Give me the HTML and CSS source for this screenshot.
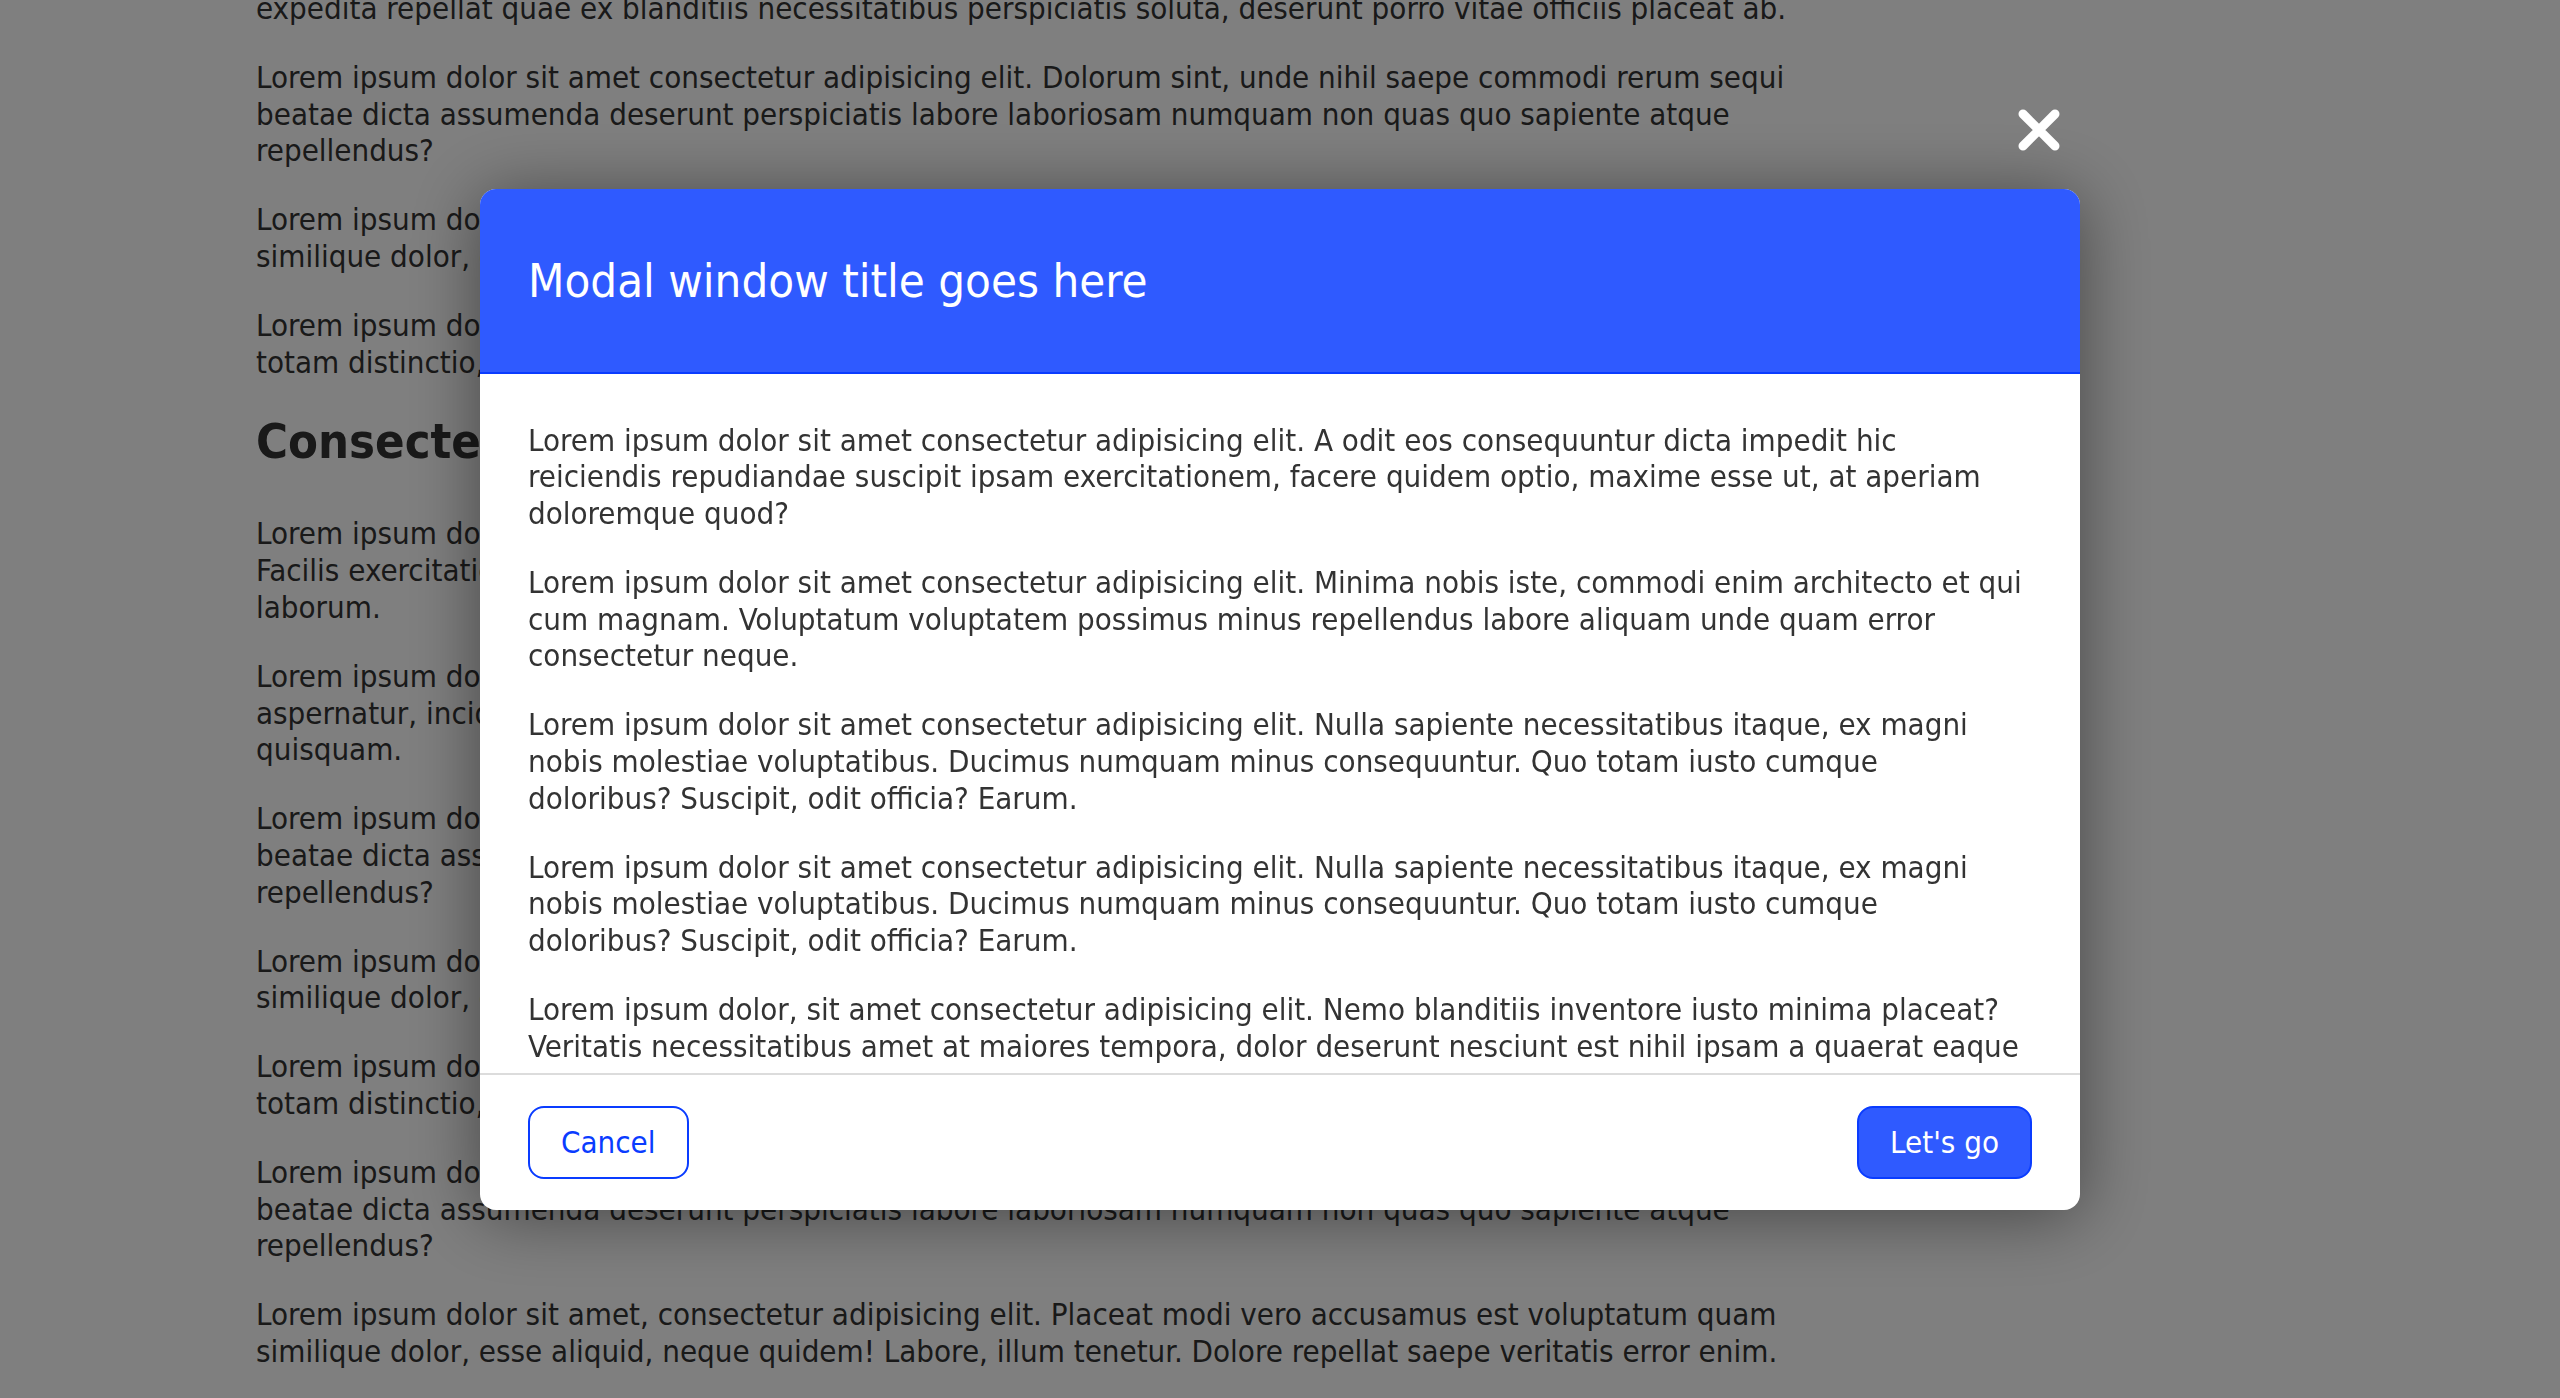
FILE: index.html
```html
<!DOCTYPE html>
<html lang="en">
<head>
<meta charset="utf-8">
<title>Modal</title>
<link rel="stylesheet" href="styles.css">
</head>
<body>
<main class="page">
  <p class="cont">expedita repellat quae ex blanditiis necessitatibus perspiciatis soluta, deserunt porro vitae officiis placeat ab.</p>
  <p>Lorem ipsum dolor sit amet consectetur adipisicing elit. Dolorum sint, unde nihil saepe commodi rerum sequi<br>beatae dicta assumenda deserunt perspiciatis labore laboriosam numquam non quas quo sapiente atque<br>repellendus?</p>
  <p>Lorem ipsum dolor sit amet, consectetur adipisicing elit. Placeat modi vero accusamus est voluptatum quam<br>similique dolor, esse aliquid, neque quidem! Labore, illum tenetur. Dolore repellat saepe veritatis error enim.</p>
  <p>Lorem ipsum dolor sit amet consectetur adipisicing elit. Quas nemo voluptate, eius dolorem ab ipsum eaque<br>totam distinctio, laudantium beatae obcaecati fugit dolorum aperiam minus ad.</p>
  <h2>Consectetur adipisicing</h2>
  <p>Lorem ipsum dolor sit amet consectetur adipisicing elit. Voluptas eligendi quia dolor ipsa quae sed.<br>Facilis exercitationem, officiis iusto aut dolore reprehenderit quas repellendus nisi dolores neque<br>laborum.</p>
  <p>Lorem ipsum dolor sit amet consectetur adipisicing elit. Ad nobis sint ratione architecto blanditiis<br>aspernatur, incidunt, doloremque eum omnis nam deleniti quos molestias porro rerum totam harum<br>quisquam.</p>
  <p>Lorem ipsum dolor sit amet consectetur adipisicing elit. Dolorum sint, unde nihil saepe commodi rerum sequi<br>beatae dicta assumenda deserunt perspiciatis labore laboriosam numquam non quas quo sapiente atque<br>repellendus?</p>
  <p>Lorem ipsum dolor sit amet, consectetur adipisicing elit. Placeat modi vero accusamus est voluptatum quam<br>similique dolor, esse aliquid, neque quidem! Labore, illum tenetur. Dolore repellat saepe veritatis error enim.</p>
  <p>Lorem ipsum dolor sit amet consectetur adipisicing elit. Quas nemo voluptate, eius dolorem ab ipsum eaque<br>totam distinctio, laudantium beatae obcaecati fugit dolorum aperiam minus ad.</p>
  <p>Lorem ipsum dolor sit amet consectetur adipisicing elit. Dolorum sint, unde nihil saepe commodi rerum sequi<br>beatae dicta assumenda deserunt perspiciatis labore laboriosam numquam non quas quo sapiente atque<br>repellendus?</p>
  <p>Lorem ipsum dolor sit amet, consectetur adipisicing elit. Placeat modi vero accusamus est voluptatum quam<br>similique dolor, esse aliquid, neque quidem! Labore, illum tenetur. Dolore repellat saepe veritatis error enim.</p>
</main>

<div class="overlay">
  <div class="dialog">
    <button class="close" type="button" aria-label="Close">
      <svg width="42" height="42" viewBox="0 0 42 42"><path d="M5 5L37 37M37 5L5 37" stroke="#fff" stroke-width="9" stroke-linecap="round" fill="none"/></svg>
    </button>
    <section class="modal">
      <header class="modal-header">
        <h1 class="modal-title">Modal window title goes here</h1>
      </header>
      <div class="modal-body">
        <p>Lorem ipsum dolor sit amet consectetur adipisicing elit. A odit eos consequuntur dicta impedit hic<br>reiciendis repudiandae suscipit ipsam exercitationem, facere quidem optio, maxime esse ut, at aperiam<br>doloremque quod?</p>
        <p>Lorem ipsum dolor sit amet consectetur adipisicing elit. Minima nobis iste, commodi enim architecto et qui<br>cum magnam. Voluptatum voluptatem possimus minus repellendus labore aliquam unde quam error<br>consectetur neque.</p>
        <p>Lorem ipsum dolor sit amet consectetur adipisicing elit. Nulla sapiente necessitatibus itaque, ex magni<br>nobis molestiae voluptatibus. Ducimus numquam minus consequuntur. Quo totam iusto cumque<br>doloribus? Suscipit, odit officia? Earum.</p>
        <p>Lorem ipsum dolor sit amet consectetur adipisicing elit. Nulla sapiente necessitatibus itaque, ex magni<br>nobis molestiae voluptatibus. Ducimus numquam minus consequuntur. Quo totam iusto cumque<br>doloribus? Suscipit, odit officia? Earum.</p>
        <p>Lorem ipsum dolor, sit amet consectetur adipisicing elit. Nemo blanditiis inventore iusto minima placeat?<br>Veritatis necessitatibus amet at maiores tempora, dolor deserunt nesciunt est nihil ipsam a quaerat eaque<br>accusamus ex ea, nemo eos rerum, numquam errores curae.</p>
      </div>
      <footer class="modal-footer">
        <button class="btn btn-outline" type="button">Cancel</button>
        <button class="btn btn-primary" type="button">Let's go</button>
      </footer>
    </section>
  </div>
</div>
</body>
</html>
```

FILE: styles.css
```css
html, body {
  margin: 0;
  padding: 0;
}

body {
  background: #fff;
  color: #333;
  font-family: "DejaVu Sans Condensed", "DejaVu Sans", sans-serif;
  font-stretch: condensed;
  font-size: 31px;
  line-height: 36.8px;
}

.page {
  width: 1750px;
  padding-left: 256px;
}

.page p {
  margin: 0 0 32px;
  white-space: nowrap;
}

.page .cont {
  margin-top: -10px;
}

.page h2 {
  font-size: 48.5px;
  line-height: 55px;
  font-weight: bold;
  margin: 34px 0 46px;
  white-space: nowrap;
}

.overlay {
  position: fixed;
  inset: 0;
  background: rgba(0, 0, 0, 0.5);
  display: flex;
  align-items: center;
  justify-content: center;
}

.dialog {
  position: relative;
  width: 1600px;
}

.close {
  position: absolute;
  top: -80px;
  right: 20px;
  width: 42px;
  height: 42px;
  padding: 0;
  border: 0;
  background: none;
  display: flex;
}

.modal {
  height: 1021px;
  background: #fff;
  border-radius: 16px;
  display: flex;
  flex-direction: column;
  box-shadow: 0 6px 70px rgba(0, 0, 0, 0.45);
}

.modal-header {
  background: #2f5aff;
  border-bottom: 2px solid #0a3cff;
  border-radius: 16px 16px 0 0;
  padding: 64px 48px;
}

.modal-title {
  margin: 0;
  color: #fff;
  font-size: 47px;
  line-height: 55px;
  font-weight: normal;
}

.modal-body {
  flex: 1;
  min-height: 0;
  overflow: hidden;
  padding: 48px 20px 48px 48px;
}

.modal-body p {
  margin: 0 0 32px;
  white-space: nowrap;
}

.modal-footer {
  border-top: 2px solid #dcdcdc;
  padding: 31px 48px;
  display: flex;
  justify-content: space-between;
  align-items: center;
}

.btn {
  font-family: inherit;
  font-stretch: condensed;
  font-size: 31px;
  line-height: 37px;
  padding: 16px 31px;
  border: 2px solid #0a3cff;
  border-radius: 16px;
  cursor: pointer;
}

.btn-outline {
  background: #fff;
  color: #0a3cff;
}

.btn-primary {
  background: #2f5aff;
  color: #fff;
}
```
